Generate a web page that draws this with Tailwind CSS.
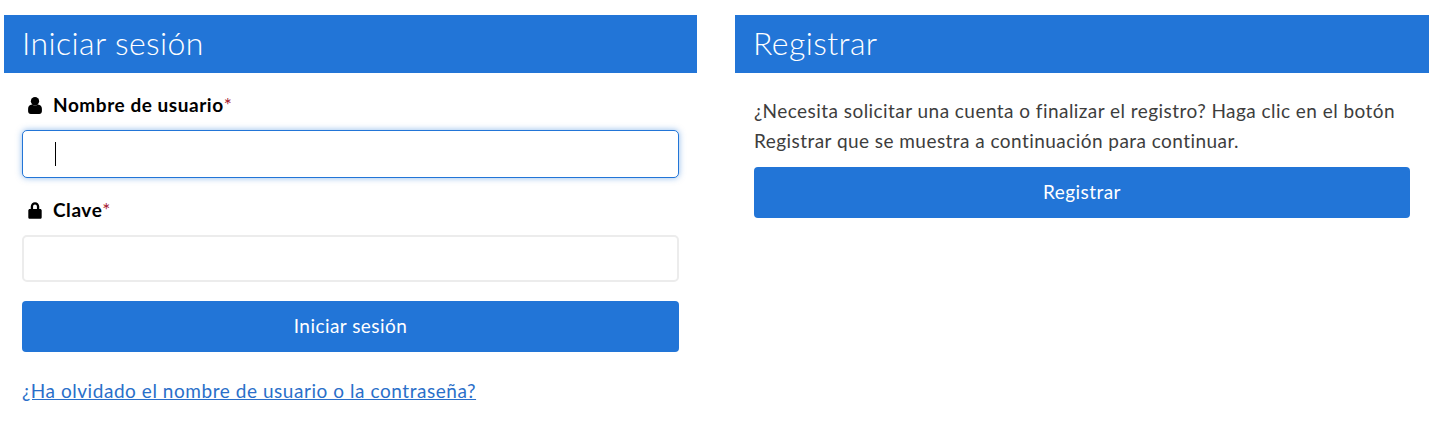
<!DOCTYPE html>
<html lang="es">
<head>
    <meta charset="UTF-8">
    <title>Iniciar sesión</title>
    <script src="https://cdn.jsdelivr.net/npm/@tailwindcss/browser@4"></script>
</head>
<body class="bg-white font-['Lato',sans-serif] overflow-hidden">
    <div class="flex gap-[38px] pl-[4px] pt-[15px]">
        <section class="w-[693px]">
            <h2 class="h-[58px] bg-[#2275d7] pl-[18px] text-[32px] leading-[56px] font-light text-white tracking-[0.4px]">Iniciar sesión</h2>
            <form class="px-[18px] pt-[20px]">
                <label class="flex h-[24px] items-center text-[19px] font-bold text-black tracking-[0.55px]">
                    <svg class="ml-[6px] mr-[11px] h-[17px] w-[14px]" viewBox="0 0 13 16" fill="#000"><circle cx="6.5" cy="4" r="3.9"/><path d="M0 13.500V11c0-2.400 1.500-3.800 3.600-4 .8.600 1.800 1 2.900 1s2.100-.4 2.900-1c2.100.2 3.600 1.600 3.600 4v2.500c0 1.400-1 2.500-2.500 2.500h-8C1 16 0 14.900 0 13.500z"/></svg>
                    Nombre de usuario<span class="font-normal text-[#a3152c]">*</span>
                </label>
                <div class="mt-[13px] flex h-[48px] items-center rounded-[5px] border border-[#2275d7] bg-white pl-[32px] shadow-[0_0_6px_rgba(34,117,215,0.5)]">
                    <span class="h-[24px] w-px bg-black"></span>
                </div>
                <label class="mt-[20px] flex h-[24px] items-center text-[19px] font-bold text-black tracking-[0.55px]">
                    <svg class="ml-[6px] mr-[11px] h-[17px] w-[14px]" viewBox="0 0 13 16" fill="#000"><path fill-rule="evenodd" d="M2.500 6.500V4.300C2.500 2 4.200.2 6.500.2s4 1.800 4 4.100v2.200h.8c.9 0 1.500.6 1.500 1.500v6.300c0 .9-.6 1.500-1.500 1.500H1.700C.8 15.800.2 15.200.2 14.300V8c0-.9.6-1.500 1.500-1.500zm2.200 0h3.600V4.300c0-1.100-.8-1.900-1.800-1.900s-1.800.8-1.800 1.900z"/></svg>
                    Clave<span class="font-normal text-[#a3152c]">*</span>
                </label>
                <div class="mt-[13px] h-[47px] rounded-[5px] border-2 border-[#ececec] bg-white"></div>
                <button type="button" class="mt-[19px] block h-[51px] w-full rounded-[4px] bg-[#2275d7] text-center text-[19px] text-white tracking-[0.45px]">Iniciar sesión</button>
                <a href="#" class="mt-[26px] block text-[19px] leading-[26px] text-[#2a6fc9] underline tracking-[0.55px]">¿Ha olvidado el nombre de usuario o la contraseña?</a>
            </form>
        </section>
        <section class="w-[694px]">
            <h2 class="h-[58px] bg-[#2275d7] pl-[18px] text-[32px] leading-[56px] font-light text-white tracking-[0.4px]">Registrar</h2>
            <div class="px-[19px] pt-[23px]">
                <p class="text-[19px] leading-[30px] text-[#3d3d3d] tracking-[0.45px]">¿Necesita solicitar una cuenta o finalizar el registro? Haga clic en el botón Registrar que se muestra a continuación para continuar.</p>
                <button type="button" class="mt-[11px] block h-[51px] w-[656px] rounded-[4px] bg-[#2275d7] text-center text-[19px] text-white tracking-[0.45px]">Registrar</button>
            </div>
        </section>
    </div>
</body>
</html>
